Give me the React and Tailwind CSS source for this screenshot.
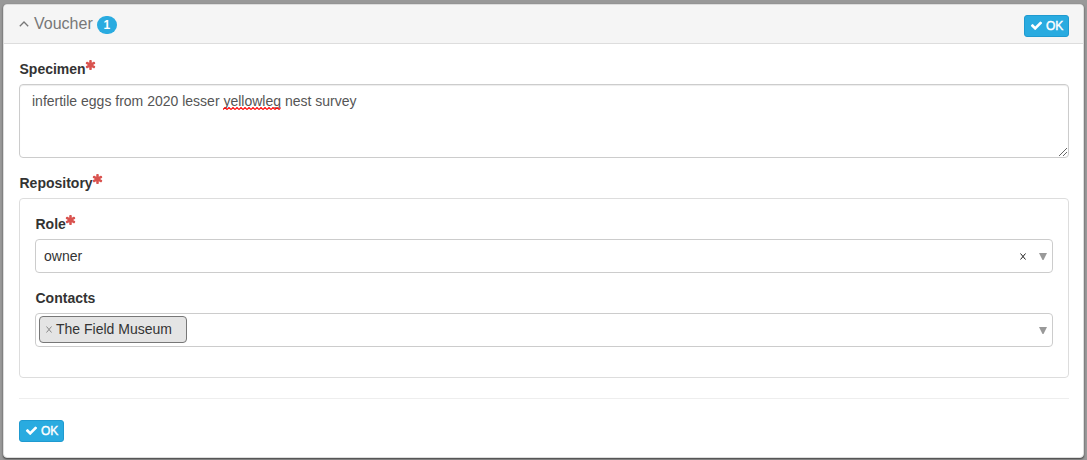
function CheckIcon() {
  return (
    <svg viewBox="0 0 1792 1792" className="mt-[-1px] h-[13px] w-[13px] shrink-0 fill-white">
      <path d="M1671 566q0 40-28 68l-724 724-136 136q-28 28-68 28t-68-28l-136-136-362-362q-28-28-28-68t28-68l136-136q28-28 68-28t68 28l294 295 656-657q28-28 68-28t68 28l136 136q28 28 28 68z" />
    </svg>
  );
}

function Required() {
  return (
    <svg viewBox="0 0 1664 1792" className="ml-[-1px] h-[12px] w-[11px] fill-[#d9534f]">
      <path d="M1482 1050q46 26 59.5 77.5t-12.5 97.5l-64 110q-26 46-77.5 59.5t-97.5-12.5l-266-153v307q0 52-38 90t-90 38h-128q-52 0-90-38t-38-90v-307l-266 153q-46 26-97.5 12.5t-77.5-59.5l-64-110q-26-46-12.5-97.5t59.5-77.5l266-154-266-154q-46-26-59.5-77.5t12.5-97.5l64-110q26-46 77.5-59.5t97.5 12.5l266 153v-307q0-52 38-90t90-38h128q52 0 90 38t38 90v307l266-153q46-26 97.5-12.5t77.5 59.5l64 110q26 46 12.5 97.5t-59.5 77.5l-266 154z" />
    </svg>
  );
}

function Label({ children, required }) {
  return (
    <div className="flex h-5 items-start pl-[0.5px] text-[14px] leading-5 font-bold text-[#333]">
      <span>{children}</span>
      {required && <Required />}
    </div>
  );
}

function OkButton() {
  return (
    <button className="flex h-[22px] w-[45px] items-center gap-[3px] rounded-[3px] border border-[#1f9ad0] bg-[#29abe0] pl-[5px] text-[12px] leading-[18px] text-white [-webkit-text-stroke:0.4px_white]">
      <CheckIcon />
      <span>OK</span>
    </button>
  );
}

function Arrow() {
  return (
    <svg viewBox="0 0 8 7" className="h-[7px] w-2 fill-[#999]">
      <path d="M0 0h8L4.5 7h-1z" />
    </svg>
  );
}

function Remove({ className }) {
  return (
    <svg viewBox="0 0 6 7" className={className} fill="none" stroke="currentColor">
      <path d="M.5.5l5 6M5.5.5l-5 6" />
    </svg>
  );
}

export default function App() {
  return (
    <div className="h-[460px] w-[1087px] bg-[#999] pt-1 pl-[3px] font-['Liberation_Sans',Arial,sans-serif]">
      <section className="h-[454px] w-[1081px] overflow-hidden rounded-[4px] border border-[#ddd] bg-white shadow-[0_1px_2px_rgba(0,0,0,0.6)]">
        <header className="flex h-[39px] items-center justify-between border-b border-[#ddd] bg-[#f5f5f5] pr-[14px] pl-[15px]">
          <div className="flex items-center">
            <svg viewBox="0 0 10 6" className="mt-[-1px] h-[6px] w-[10px]" fill="none" stroke="#777" strokeWidth="1.3">
              <path d="M.8 5.2L5 1l4.2 4.2" />
            </svg>
            <h1 className="ml-[5px] text-[16px] leading-5 text-[#777]">Voucher</h1>
            <span className="mt-[1px] ml-1 flex h-[18px] w-5 items-center justify-center rounded-[10px] bg-[#29abe0] text-[12px] leading-3 font-bold text-white">1</span>
          </div>
          <div className="mt-[4px]"><OkButton /></div>
        </header>

        <div className="flex flex-col pt-[15px] pr-[14px] pl-[15px]">
          <Label required>Specimen</Label>
          <div className="relative mt-[5px] h-[74px] rounded-[4px] border border-[#ccc] px-3 py-[6px] text-[14px] leading-5 text-[#555] shadow-[inset_0_1px_1px_rgba(0,0,0,0.075)]">
            infertile eggs from 2020 lesser{" "}
            <span className="relative inline-block">
              yellowleg
              <svg className="absolute bottom-[1px] left-0 h-[3px] w-full" fill="none" stroke="#f00" strokeWidth="1.1">
                <defs>
                  <pattern id="squiggle" width="4" height="3" patternUnits="userSpaceOnUse">
                    <path d="M0 2.5L2 .5l2 2" />
                  </pattern>
                </defs>
                <rect width="100%" height="3" fill="url(#squiggle)" stroke="none" />
              </svg>
            </span>{" "}
            nest survey
            <svg viewBox="0 0 8 8" className="absolute right-[1px] bottom-[1px] h-2 w-2" stroke="#555" strokeWidth=".9">
              <path d="M0 8L8 0M4 8l4-4" />
            </svg>
          </div>

          <div className="mt-[15px]"><Label required>Repository</Label></div>
          <div className="mt-[5px] h-[180px] rounded-[4px] border border-[#ddd] px-[15px] pt-[15px]">
            <Label required>Role</Label>
            <div className="mt-[5px] flex h-[34px] items-center rounded-[4px] border border-[#ccc] pr-[5px] pl-2 text-[14px] text-[#333]">
              <span className="flex-1">owner</span>
              <Remove className="mr-[13px] h-[7px] w-[6px] text-[#222]" />
              <Arrow />
            </div>
            <div className="mt-[15px]"><Label>Contacts</Label></div>
            <div className="mt-[5px] flex h-[34px] items-center justify-between rounded-[4px] border border-[#ccc] pr-[5px] pl-[3px]">
              <div className="mb-[1px] flex h-[27px] w-[148px] items-center rounded-[4px] border border-[#777] bg-[#e4e4e4] pl-[6px] text-[14px] leading-5 text-[#333]">
                <Remove className="mr-[4px] h-[7px] w-[6px] text-[#888]" />
                <span className="mt-[-1px]">The Field Museum</span>
              </div>
              <Arrow />
            </div>
          </div>
          <hr className="mt-5 border-t border-[#eee]" />
          <div className="mt-[21px]"><OkButton /></div>
        </div>
      </section>
    </div>
  );
}
